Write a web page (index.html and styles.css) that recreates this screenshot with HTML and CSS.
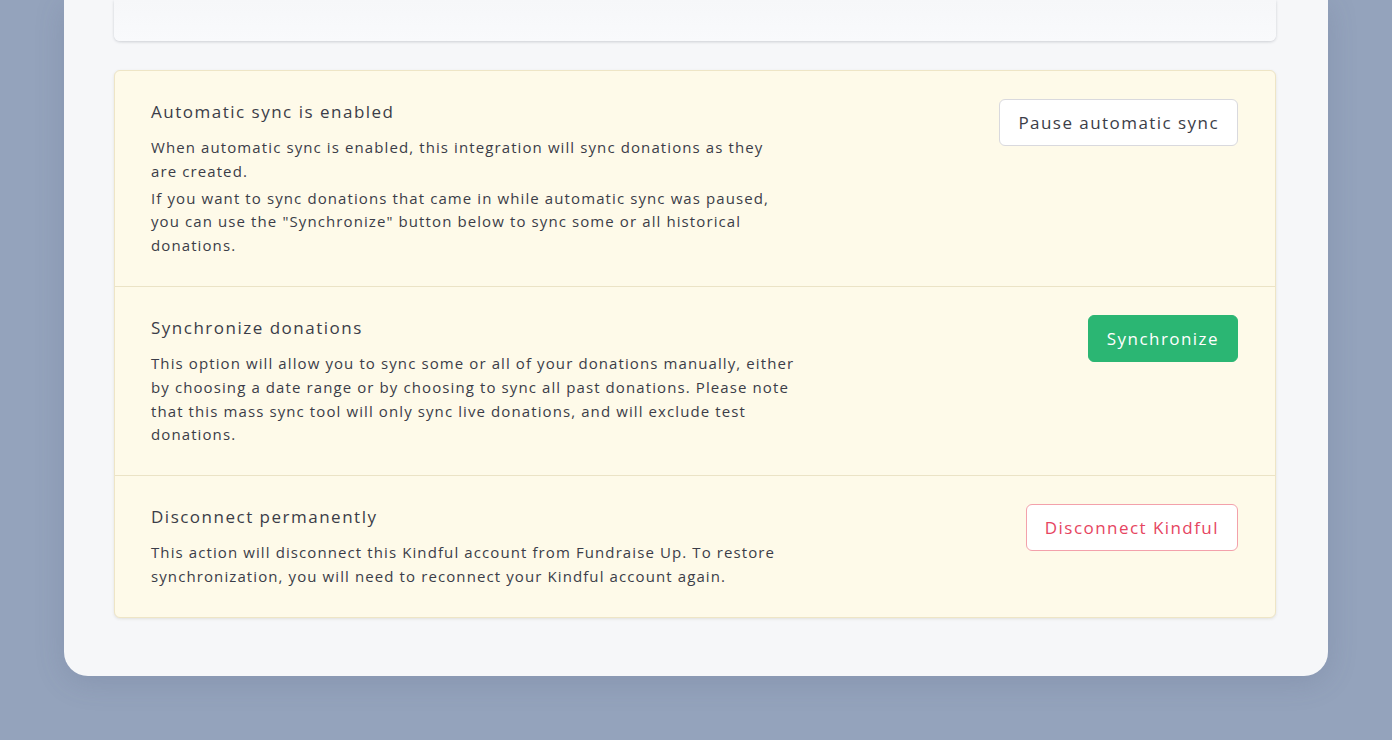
FILE: index.html
```html
<!DOCTYPE html>
<html lang="en">
<head>
    <meta charset="UTF-8">
    <title>Kindful integration</title>
    <link rel="stylesheet" href="styles.css">
</head>
<body>
    <div class="panel">
        <div class="top-card"></div>

        <div class="sync-card">
            <div class="row">
                <div class="info info-narrow">
                    <h3>Automatic sync is enabled</h3>
                    <p>When automatic sync is enabled, this integration will sync donations as they are created.</p>
                    <p>If you want to sync donations that came in while automatic sync was paused, you can use the "Synchronize" button below to sync some or all historical donations.</p>
                </div>
                <button class="btn">Pause automatic sync</button>
            </div>
            <div class="row">
                <div class="info">
                    <h3>Synchronize donations</h3>
                    <p>This option will allow you to sync some or all of your donations manually, either by choosing a date range or by choosing to sync all past donations. Please note that this mass sync tool will only sync live donations, and will exclude test donations.</p>
                </div>
                <button class="btn btn-green">Synchronize</button>
            </div>
            <div class="row">
                <div class="info">
                    <h3>Disconnect permanently</h3>
                    <p>This action will disconnect this Kindful account from Fundraise Up. To restore synchronization, you will need to reconnect your Kindful account again.</p>
                </div>
                <button class="btn btn-danger">Disconnect Kindful</button>
            </div>
        </div>
    </div>
</body>
</html>
```

FILE: styles.css
```css
* {
    box-sizing: border-box;
}

body {
    margin: 0;
    height: 740px;
    overflow: hidden;
    background: #94a3bc;
    font-family: "Open Sans", "Noto Sans", sans-serif;
    color: #3b3d48;
}

.panel {
    margin: 0 64px;
    padding: 0 52px 58px 50px;
    background: #f6f7f9;
    border-radius: 0 0 24px 24px;
    box-shadow: 0 6px 30px rgba(70, 85, 115, 0.18);
}

.top-card {
    height: 41px;
    background: linear-gradient(#f6f7f9, #f9fafc);
    border-radius: 0 0 6px 6px;
    box-shadow: 0 1px 3px rgba(40, 50, 70, 0.2);
    margin-bottom: 29px;
}

.sync-card {
    background: #fefae9;
    border: 1px solid #eee5c6;
    border-radius: 6px;
    box-shadow: 0 1px 3px rgba(80, 70, 30, 0.12);
}

.row {
    display: flex;
    justify-content: space-between;
    align-items: flex-start;
    padding: 27px 37px 28px 36px;
    border-top: 1px solid #ebe3c6;
}

.row:first-child {
    border-top: none;
}

.info {
    width: 646px;
}

.info-narrow {
    width: 630px;
}

.info h3 {
    margin: 0 0 10px;
    font-size: 17px;
    font-weight: 400;
    line-height: 28px;
    letter-spacing: 1.5px;
    color: #3b3d48;
}

.info p {
    margin: 0 0 0;
    font-size: 15px;
    line-height: 23.8px;
    letter-spacing: 1.1px;
}

.info p + p {
    margin-top: 3px;
}

.btn {
    margin-top: 1px;
    height: 47px;
    padding: 0 18px;
    font-family: inherit;
    font-size: 17px;
    letter-spacing: 1.45px;
    color: #3b3d48;
    background: #fff;
    border: 1px solid #d9d9de;
    border-radius: 6px;
}

.btn-green {
    background: #2bb673;
    border-color: #2bb673;
    color: #fff;
}

.btn-danger {
    border-color: #f3a1ab;
    color: #e6455f;
}
```
